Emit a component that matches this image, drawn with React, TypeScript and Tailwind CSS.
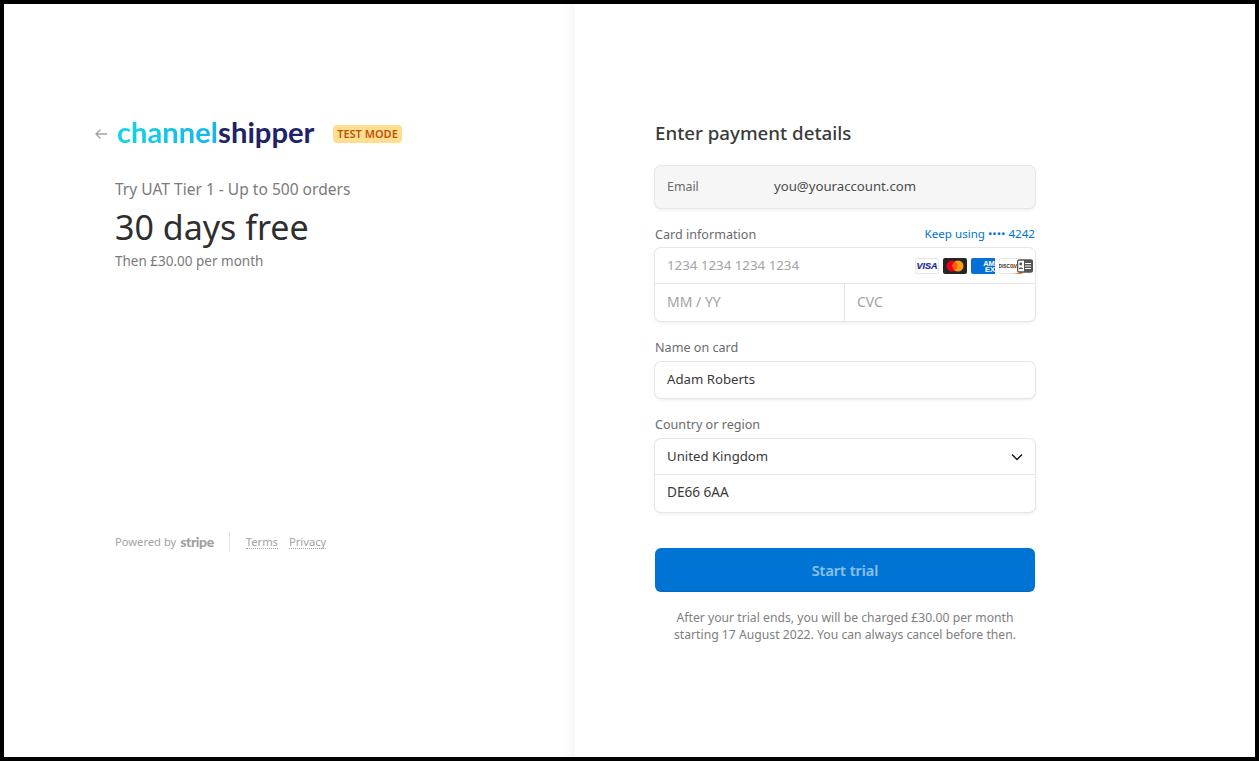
const font = "font-['Noto_Sans','Open_Sans',sans-serif]";

function Visa() {
  return (
    <svg width="24" height="16" viewBox="0 0 24 16" className="shrink-0">
      <rect x="0.5" y="0.5" width="23" height="15" rx="2" fill="#fff" stroke="#e6e6e6" />
      <text x="12" y="11.400" textAnchor="middle" fontSize="9" fontWeight="700" fontStyle="italic" fontFamily="Liberation Sans" fill="#1a2a9a" stroke="#1a2a9a" strokeWidth="0.200">VISA</text>
    </svg>
  );
}
function Master() {
  return (
    <svg width="24" height="16" viewBox="0 0 24 16" className="shrink-0">
      <rect width="24" height="16" rx="2" fill="#252525" />
      <circle cx="9" cy="8" r="5.500" fill="#eb001b" />
      <circle cx="15" cy="8" r="5.500" fill="#f79e1b" />
      <path d="M12 3.400a5.500 5.500 0 0 1 0 9.200a5.500 5.500 0 0 1 0-9.200z" fill="#ff5f00" />
    </svg>
  );
}
function Amex() {
  return (
    <svg width="24" height="16" viewBox="0 0 24 16" className="shrink-0">
      <path d="M2 0h22v16H2a2 2 0 0 1-2-2V2a2 2 0 0 1 2-2z" fill="#0570d6" />
      <text x="18" y="7.500" textAnchor="middle" fontSize="7.500" fontWeight="700" fontFamily="Liberation Sans" fill="#fff">AM</text>
      <text x="19" y="14" textAnchor="middle" fontSize="7.500" fontWeight="700" fontFamily="Liberation Sans" fill="#fff">EX</text>
    </svg>
  );
}
function Discover() {
  return (
    <svg width="24" height="16" viewBox="0 0 24 16" className="shrink-0">
      <rect x="0.5" y="0.5" width="23" height="15" rx="2" fill="#fff" stroke="#e6e6e6" />
      <text x="12" y="10" textAnchor="middle" fontSize="4.800" fontWeight="700" fontFamily="Liberation Sans" fill="#333">DISCOVER</text>
      <circle cx="14.200" cy="8.400" r="1.500" fill="#f48120" />
      <path d="M14 16c4 -0.500 7 -1.500 10 -3v1a2 2 0 0 1-2 2z" fill="#f48120" />
    </svg>
  );
}
function Contact() {
  return (
    <svg width="16" height="14" viewBox="0 0 16 14" className="absolute right-[2px] top-[11px]">
      <rect x="0.600" y="1" width="14.800" height="12" rx="1.500" fill="#fff" stroke="#555" strokeWidth="1.300" />
      <path d="M7 1h7.500a1 1 0 0 1 1 1v10a1 1 0 0 1-1 1H7z" fill="#555" />
      <path d="M8 4.500h6M8 7h6M8 9.500h6" stroke="#fff" strokeWidth="1" />
      <circle cx="3.800" cy="5" r="1.400" fill="#555" />
      <path d="M1.500 10c.3-2 4.300-2 4.600 0z" fill="#555" />
    </svg>
  );
}

const shadow = "shadow-[0_0_0_1px_#e6e6e6,0_2px_4px_0_rgba(0,0,0,0.07),0_1px_1.5px_0_rgba(0,0,0,0.05)]";

export default function App() {
  return (
    <div className={`${font} h-screen w-full border-4 border-black bg-white flex overflow-hidden text-[#1a1a1a]`}>
      <div className="w-[571px] shrink-0 pt-[118px] pl-[90px] flex flex-col relative shadow-[inset_-20px_0_15px_-15px_rgba(0,0,0,0.035)]">
        <div className="flex items-center h-[24px]">
          <svg width="14" height="12" viewBox="0 0 14 12" className="shrink-0">
            <path d="M13 6H2M6.500 1.500L2 6l4.500 4.500" fill="none" stroke="#a3a3a3" strokeWidth="1.400" />
          </svg>
          <div className="ml-[9px] w-[197px] flex items-baseline text-[29.2px] leading-[24px] font-['Lato',sans-serif] font-bold relative top-[-2px]">
            <span className="bg-linear-to-r from-[#10d6e6] to-[#18b4ea] bg-clip-text text-transparent">channel</span>
            <span className="text-[#221f6b]">shipper</span>
          </div>
          <span className="ml-[19px] h-[18px] w-[69px] rounded-[4px] bg-[#ffde92] text-[#bb5504] text-[11px] font-semibold leading-[18px] text-center whitespace-nowrap">TEST MODE</span>
        </div>
        <div className="ml-[21px] mt-[33px] text-[15.55px] leading-[20px] text-[#7a7a7a]">Try UAT Tier 1 - Up to 500 orders</div>
        <div className="ml-[21px] mt-[6px] text-[34px] leading-[44px] text-[#2e2e2e]">30 days free</div>
        <div className="ml-[21px] mt-[3px] text-[13.5px] leading-[18px] text-[#7a7a7a]">Then £30.00 per month</div>
        <div className="ml-[21px] mt-[262px] flex items-center h-[20px] text-[11.2px] text-[#a3a3a3]">
          <span>Powered by</span>
          <span className="ml-[4px] font-black text-[14px] tracking-[-0.4px] leading-[14px] text-[#a0a0a0] font-['Lato',sans-serif]">stripe</span>
          <span className="ml-[15px] h-[20px] w-px bg-[#e6e6e6]" />
          <span className="ml-[16px] border-b border-dotted border-[#a3a3a3] leading-[13px]">Terms</span>
          <span className="ml-[11px] border-b border-dotted border-[#a3a3a3] leading-[13px]">Privacy</span>
        </div>
      </div>

      <div className="flex-1 pl-[80px] pt-[115px]">
        <div className="w-[380px]">
          <h2 className="text-[18.7px] leading-[28px] font-medium text-[#3a3a3a]">Enter payment details</h2>

          <div className={`mt-[19px] h-[42px] rounded-[6px] bg-[#f6f6f6] flex items-center px-[12px] ${shadow}`}>
            <span className="w-[107px] text-[12.4px] text-[#6b6b6b]">Email</span>
            <span className="text-[13.2px] text-[#4a4a4a]">you@youraccount.com</span>
          </div>

          <div className="mt-[18px] h-[18px] flex items-center justify-between">
            <span className="text-[12.6px] text-[#6b6b6b]">Card information</span>
            <span className="text-[11.6px] text-[#0074d4] relative top-[-1px]">Keep using •••• 4242</span>
          </div>
          <div className={`mt-[4px] rounded-[6px] bg-white ${shadow}`}>
            <div className="relative h-[36px] pt-[1px] flex items-center justify-between pl-[12px] pr-[12px] border-b border-[#e6e6e6]">
              <span className="text-[13.3px] text-[#a3a3a3]">1234 1234 1234 1234</span>
              <div className="flex items-center gap-[4px]">
                <Visa />
                <Master />
                <Amex />
                <Discover />
                <Contact />
              </div>
            </div>
            <div className="flex h-[37px]">
              <div className="w-[190px] flex items-center pl-[12px] pb-[2px] border-r border-[#e6e6e6] text-[14px] text-[#a3a3a3]">MM / YY</div>
              <div className="flex-1 flex items-center pl-[12px] pb-[2px] text-[14px] text-[#a3a3a3]">CVC</div>
            </div>
          </div>

          <div className="mt-[18px] text-[12.6px] leading-[18px] text-[#6b6b6b]">Name on card</div>
          <div className={`mt-[5px] h-[36px] rounded-[6px] bg-white flex items-center px-[12px] text-[13.2px] text-[#3a3a3a] ${shadow}`}>Adam Roberts</div>

          <div className="mt-[18px] text-[12.6px] leading-[18px] text-[#6b6b6b]">Country or region</div>
          <div className={`mt-[5px] rounded-[6px] bg-white ${shadow}`}>
            <div className="h-[36px] pt-[1px] flex items-center justify-between px-[12px] border-b border-[#e6e6e6] text-[13.2px] text-[#3a3a3a]">
              <span>United Kingdom</span>
              <svg width="12" height="8" viewBox="0 0 12 8">
                <path d="M1 1.500l5 5 5-5" fill="none" stroke="#1a1a1a" strokeWidth="1.500" />
              </svg>
            </div>
            <div className="h-[37px] pb-[2px] flex items-center px-[12px] text-[13.6px] text-[#3a3a3a]">DE66 6AA</div>
          </div>

          <div className="mt-[36px] h-[44px] pt-[1px] rounded-[6px] bg-[#0074d4] flex items-center justify-center text-[14.4px] font-semibold text-white/55 shadow-[inset_0_-1px_1px_rgba(0,0,0,0.1)]">Start trial</div>

          <p className="mt-[17px] text-[12.2px] leading-[17px] text-center text-[#808080]">
            After your trial ends, you will be charged £30.00 per month
            <br />
            starting 17 August 2022. You can always cancel before then.
          </p>
        </div>
      </div>
    </div>
  );
}
